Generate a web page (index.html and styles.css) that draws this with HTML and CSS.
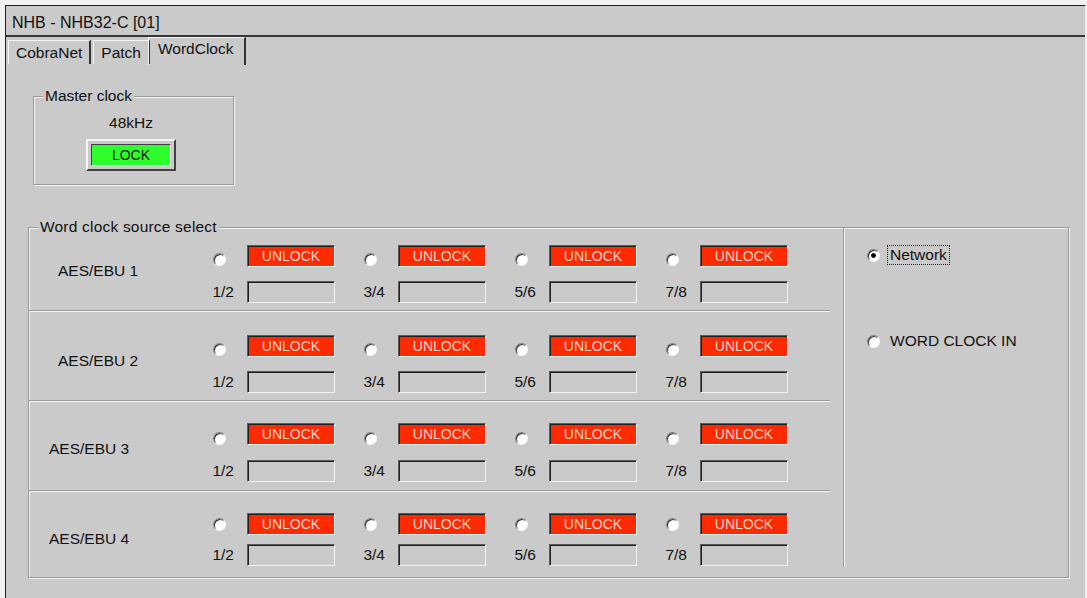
FILE: index.html
```html
<!DOCTYPE html>
<html lang="en">
<head>
    <meta charset="UTF-8">
    <meta name="viewport" content="width=device-width, initial-scale=1.0">
    <title>NHB - NHB32-C [01]</title>
    <link rel="stylesheet" href="styles.css">
</head>
<body>
    <div class="window">
        <div class="titlebar">NHB - NHB32-C [01]</div>

        <div class="tabs">
            <div class="tab">CobraNet</div>
            <div class="tab">Patch</div>
            <div class="tab active">WordClock</div>
        </div>

        <div class="panel">
            <fieldset class="group master">
                <legend>Master clock</legend>
                <div class="freq">48kHz</div>
                <div class="lock-btn">
                    <div class="lock-led">LOCK</div>
                </div>
            </fieldset>

            <fieldset class="group source">
                <legend>Word clock source select</legend>
                <div class="source-body">
                    <div class="rows" id="rows">

                    </div>
                    <div class="vline"></div>
                    <div class="choices">
                        <div class="choice">
                            <span class="radio checked"></span>
                            <span class="choice-label focused">Network</span>
                        </div>
                        <div class="choice second">
                            <span class="radio"></span>
                            <span class="choice-label">WORD CLOCK IN</span>
                        </div>
                    </div>
                </div>
            </fieldset>
        </div>
    </div>

    <script>
        let inputs = ["AES/EBU 1", "AES/EBU 2", "AES/EBU 3", "AES/EBU 4"];
        let pairs = ["1/2", "3/4", "5/6", "7/8"];

        function buildRows() {
            let html = "";

            inputs.forEach(name => {
                html += `<div class="row"><div class="row-label">${name}</div>`;
                pairs.forEach(pair => {
                    html += `<div class="channel">
                        <div class="radio-cell"><span class="radio"></span></div>
                        <div class="led">UNLOCK</div>
                        <div class="pair">${pair}</div>
                        <div class="slot"></div>
                    </div>`;
                });
                html += `</div>`;
            });

            document.getElementById("rows").innerHTML = html;
        }

        buildRows();
    </script>
</body>
</html>
```

FILE: styles.css
```css
body {
    margin: 0;
    background-color: #f2f2f2;
    font-family: "Liberation Sans", Arial, sans-serif;
    font-size: 15.5px;
    color: #111;
}
.window {
    margin: 5px 0 0 5px;
    width: 1081px;
    height: 593px;
    box-sizing: border-box;
    border-left: 1px solid #202020;
    border-top: 1px solid #202020;
    border-right: 1px solid #eeeeee;
    background-color: #cacaca;
    overflow: hidden;
}
.titlebar {
    height: 31px;
    box-sizing: border-box;
    padding: 3px 0 0 6px;
    line-height: 28px;
    font-size: 16px;
    border-bottom: 2px solid #363636;
}
.tabs {
    display: flex;
    height: 27px;
    padding-left: 2px;
}
.tab {
    margin-top: 3px;
    margin-right: 2px;
    height: 24px;
    box-sizing: border-box;
    padding: 1px 7px 0 7px;
    line-height: 22px;
    border-top: 1px solid #f4f4f4;
    border-left: 1px solid #f4f4f4;
    border-right: 2px solid #333;
}
.tab.active {
    margin-top: 0;
    margin-left: -4px;
    height: 28px;
    padding: 0 10px 0 9px;
}
.group {
    margin: 0;
    padding: 0;
    box-sizing: border-box;
    border: 1px solid #999;
    box-shadow: inset 1px 1px 0 #f4f4f4, 1px 1px 0 #f4f4f4;
    min-width: 0;
}
.group legend {
    margin-left: 9px;
    padding: 0 2px;
    line-height: 16px;
    background-color: #cacaca;
}
.master {
    margin: 24px 0 0 27px;
    width: 201px;
    padding: 0 5px 13px 0;
}
.freq {
    margin-top: 10px;
    line-height: 18px;
    text-align: center;
}
.lock-btn {
    width: 90px;
    height: 32px;
    margin: 7px auto 0;
    box-sizing: border-box;
    padding: 3px;
    border: 2px solid;
    border-color: #f4f4f4 #404040 #404040 #f4f4f4;
}
.lock-led {
    height: 22px;
    box-sizing: border-box;
    border: 1px solid;
    border-color: #404040 #f4f4f4 #f4f4f4 #404040;
    background-color: #2dff2d;
    font-size: 14px;
    line-height: 20px;
    text-align: center;
    color: #111;
}
.source {
    margin: 34px 0 0 22px;
    width: 1041px;
}
.source legend {
    letter-spacing: 0.2px;
}
.source-body {
    display: flex;
    padding-bottom: 10px;
}
.rows {
    width: 801px;
}
.row {
    display: flex;
    height: 89px;
    box-sizing: border-box;
    padding-top: 21px;
    margin-bottom: 1px;
    border-bottom: 1px solid #999;
    box-shadow: 0 1px 0 #f4f4f4;
}
.row:first-child {
    height: 76px;
    padding-top: 10px;
}
.row:nth-child(2) {
    padding-top: 23px;
}
.row:last-child {
    height: 75px;
    margin-bottom: 0;
    border-bottom: none;
    box-shadow: none;
}
.row-label {
    width: 178px;
    box-sizing: border-box;
    padding-left: 29px;
    line-height: 51px;
}
.row:nth-child(n+3) .row-label {
    padding-left: 20px;
}
.channel {
    display: grid;
    grid-template-columns: 40px 88px;
    row-gap: 7px;
    margin-right: 23px;
}
.radio-cell {
    display: flex;
    align-items: center;
    padding-left: 6px;
}
.radio {
    display: block;
    width: 13px;
    height: 13px;
    box-sizing: border-box;
    border-radius: 50%;
    border: 1px solid;
    border-color: #808080 #f8f8f8 #f8f8f8 #808080;
    box-shadow: inset 1px 1px 0 #303030;
    background-color: #fff;
}
.radio.checked {
    background: radial-gradient(circle, #000 0 2px, #fff 2.6px);
}
.led,
.slot {
    height: 22px;
    box-sizing: border-box;
    border: 1px solid;
    border-color: #5a5a5a #f4f4f4 #f4f4f4 #5a5a5a;
    box-shadow: inset 1px 1px 0 #202020;
}
.led {
    background-color: #ff2a00;
    color: #ffd6ca;
    font-size: 14px;
    line-height: 20px;
    text-align: center;
}
.pair {
    padding-right: 13px;
    text-align: right;
    line-height: 22px;
}
.vline {
    width: 1px;
    margin: -7px 0 0 13px;
    background-color: #999;
    box-shadow: 1px 0 0 #f4f4f4;
}
.choices {
    padding: 10px 0 0 23px;
}
.choice {
    display: flex;
    align-items: center;
    gap: 7px;
    height: 20px;
}
.choice.second {
    margin-top: 66px;
}
.choice-label {
    padding: 0 2px;
    line-height: 18px;
    border: 1px dotted transparent;
}
.choice-label.focused {
    border-color: #222;
}
```
